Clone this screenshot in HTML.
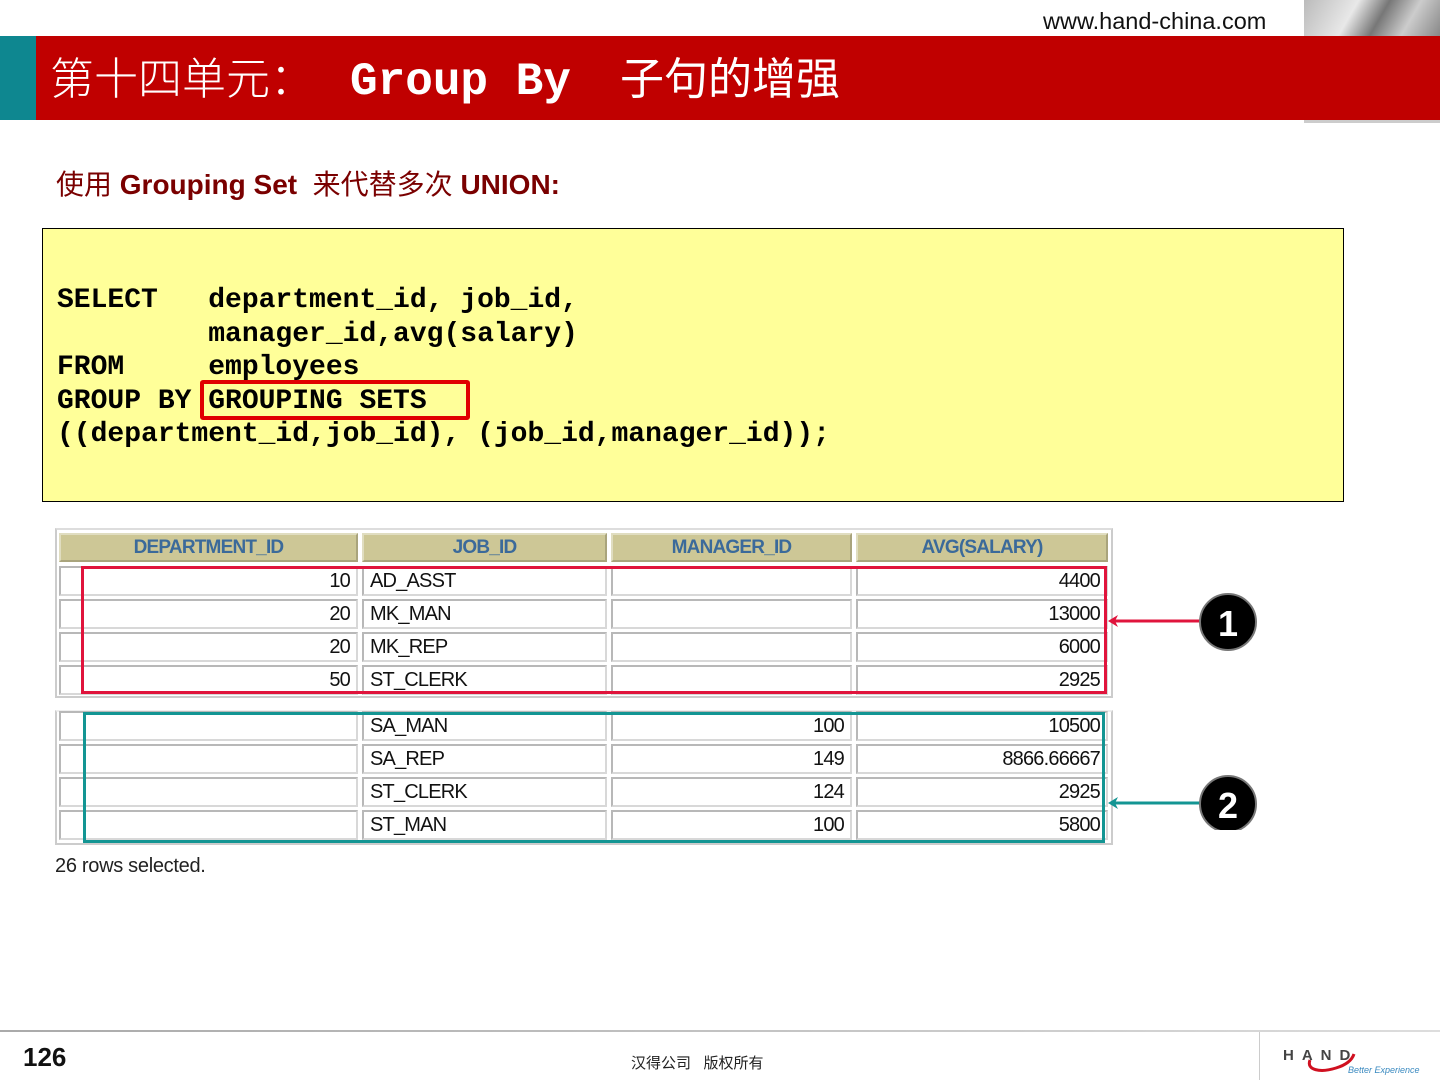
<!DOCTYPE html>
<html><head><meta charset="utf-8"><style>
*{margin:0;padding:0;box-sizing:border-box}
body{width:1440px;height:1080px;position:relative;background:#fff;overflow:hidden;font-family:"Liberation Sans","Noto Sans CJK SC",sans-serif}
.a{position:absolute}
.c{position:absolute;border:2px solid #b8b8b8;border-right-color:#d8d8d8;border-bottom-color:#d8d8d8;background:#fff;font-family:"Liberation Sans",sans-serif;font-size:20px;color:#111;line-height:26px;padding:0 6px;white-space:nowrap;letter-spacing:-0.8px}
.h{background:#cdc796;border-color:#e0ddc0 #a9a47c #a9a47c #e0ddc0;color:#3b6a9a;font-weight:bold;text-align:center;font-size:19px;line-height:25px}
.r{text-align:right}
pre{font-family:"Liberation Mono",monospace;font-weight:bold;font-size:28px;line-height:33.5px;color:#000}
.t{position:absolute;color:#fff;white-space:nowrap;font-size:46px}
</style></head><body>
<div class="a" style="left:1043px;top:8px;font-size:23.5px;color:#111">www.hand-china.com</div>
<div class="a" style="left:1304px;top:0;width:136px;height:36px;background:linear-gradient(120deg,#bbb,#e8e8e8 35%,#777 55%,#ccc 75%,#888)"></div>
<div class="a" style="left:1304px;top:120px;width:136px;height:3px;background:#ccc"></div>
<div class="a" style="left:0;top:36px;width:36px;height:84px;background:#0e8790"></div>
<div class="a" style="left:36px;top:36px;width:1404px;height:84px;background:#c00000"></div>
<div class="t" style="left:50px;font-weight:300;font-size:44px;top:43px">第十四单元：</div>
<div class="t" style="left:350px;font-family:'Liberation Mono',monospace;font-weight:bold;font-size:46px;top:56px">Group By</div>
<div class="t" style="left:620px;font-size:44px;top:43px">子句的增强</div>
<div class="a" style="left:56px;top:163px;font-size:28px;color:#7a0000;white-space:nowrap">使用 <b>Grouping Set</b>&nbsp; 来代替多次 <b>UNION:</b></div>
<div class="a" style="left:42px;top:228px;width:1302px;height:274px;background:#ffff99;border:1px solid #000"></div>
<pre class="a" style="left:57px;top:284px">SELECT   department_id, job_id,
         manager_id,avg(salary)
FROM     employees
GROUP BY GROUPING SETS
((department_id,job_id), (job_id,manager_id));</pre>
<div class="a" style="left:200px;top:380px;width:270px;height:40px;border:4px solid #e00000;border-radius:3px"></div>

<div class="a" style="left:55px;top:528px;width:1058px;height:170px;border:2px solid #ccc;border-top-color:#ddd"></div>
<div class="a" style="left:55px;top:710px;width:1058px;height:135px;border:2px solid #ccc;border-top-color:#eee"></div>

<div class="c h" style="left:59px;top:533px;width:299px;height:29px">DEPARTMENT_ID</div>
<div class="c h" style="left:362px;top:533px;width:245px;height:29px">JOB_ID</div>
<div class="c h" style="left:611px;top:533px;width:241px;height:29px">MANAGER_ID</div>
<div class="c h" style="left:856px;top:533px;width:252px;height:29px">AVG(SALARY)</div>

<div class="c r" style="left:59px;top:566px;width:299px;height:30px">10</div>
<div class="c" style="left:362px;top:566px;width:245px;height:30px">AD_ASST</div>
<div class="c" style="left:611px;top:566px;width:241px;height:30px"></div>
<div class="c r" style="left:856px;top:566px;width:252px;height:30px">4400</div>
<div class="c r" style="left:59px;top:599px;width:299px;height:30px">20</div>
<div class="c" style="left:362px;top:599px;width:245px;height:30px">MK_MAN</div>
<div class="c" style="left:611px;top:599px;width:241px;height:30px"></div>
<div class="c r" style="left:856px;top:599px;width:252px;height:30px">13000</div>
<div class="c r" style="left:59px;top:632px;width:299px;height:30px">20</div>
<div class="c" style="left:362px;top:632px;width:245px;height:30px">MK_REP</div>
<div class="c" style="left:611px;top:632px;width:241px;height:30px"></div>
<div class="c r" style="left:856px;top:632px;width:252px;height:30px">6000</div>
<div class="c r" style="left:59px;top:665px;width:299px;height:30px">50</div>
<div class="c" style="left:362px;top:665px;width:245px;height:30px">ST_CLERK</div>
<div class="c" style="left:611px;top:665px;width:241px;height:30px"></div>
<div class="c r" style="left:856px;top:665px;width:252px;height:30px">2925</div>

<div class="c" style="left:59px;top:711px;width:299px;height:30px"></div>
<div class="c" style="left:362px;top:711px;width:245px;height:30px">SA_MAN</div>
<div class="c r" style="left:611px;top:711px;width:241px;height:30px">100</div>
<div class="c r" style="left:856px;top:711px;width:252px;height:30px">10500</div>
<div class="c" style="left:59px;top:744px;width:299px;height:30px"></div>
<div class="c" style="left:362px;top:744px;width:245px;height:30px">SA_REP</div>
<div class="c r" style="left:611px;top:744px;width:241px;height:30px">149</div>
<div class="c r" style="left:856px;top:744px;width:252px;height:30px">8866.66667</div>
<div class="c" style="left:59px;top:777px;width:299px;height:30px"></div>
<div class="c" style="left:362px;top:777px;width:245px;height:30px">ST_CLERK</div>
<div class="c r" style="left:611px;top:777px;width:241px;height:30px">124</div>
<div class="c r" style="left:856px;top:777px;width:252px;height:30px">2925</div>
<div class="c" style="left:59px;top:810px;width:299px;height:30px"></div>
<div class="c" style="left:362px;top:810px;width:245px;height:30px">ST_MAN</div>
<div class="c r" style="left:611px;top:810px;width:241px;height:30px">100</div>
<div class="c r" style="left:856px;top:810px;width:252px;height:30px">5800</div>

<div class="a" style="left:81px;top:566px;width:1026px;height:128px;border:3px solid #e0143c"></div>
<div class="a" style="left:83px;top:712px;width:1022px;height:131px;border:3px solid #139593"></div>

<svg class="a" style="left:1100px;top:590px" width="170" height="240">
<line x1="103" y1="31" x2="12" y2="31" stroke="#e0143c" stroke-width="3"/>
<path d="M8 31 L18 25 L15 31 L18 37Z" fill="#e0143c"/>
<circle cx="128" cy="32" r="28" fill="#000" stroke="#777" stroke-width="2"/>
<text x="128" y="46" fill="#fff" font-family="Liberation Sans" font-weight="bold" font-size="36" text-anchor="middle">1</text>
<line x1="103" y1="213" x2="12" y2="213" stroke="#139593" stroke-width="3"/>
<path d="M8 213 L18 207 L15 213 L18 219Z" fill="#139593"/>
<circle cx="128" cy="214" r="28" fill="#000" stroke="#777" stroke-width="2"/>
<text x="128" y="228" fill="#fff" font-family="Liberation Sans" font-weight="bold" font-size="36" text-anchor="middle">2</text>
</svg>

<div class="a" style="left:55px;top:855px;font-size:20px;color:#222;letter-spacing:-0.3px">26 rows selected.</div>

<div class="a" style="left:0;top:1030px;width:1440px;height:2px;background:linear-gradient(90deg,#aaa,#ccc 70%,#ddd)"></div>
<div class="a" style="left:1259px;top:1032px;width:1px;height:48px;background:#ccc"></div>
<div class="a" style="left:23px;top:1042px;font-size:26px;font-weight:bold;color:#111">126</div>
<div class="a" style="left:631px;top:1052px;font-size:15px;color:#222;white-space:nowrap">汉得公司 &nbsp; 版权所有</div>
<svg class="a" style="left:1280px;top:1040px" width="160" height="40">
<path d="M30 20 C26 30 40 33 56 28 C66 25 72 20 74 14" fill="none" stroke="#d01020" stroke-width="3"/>
<text x="3" y="20" font-family="Liberation Sans" font-weight="bold" font-size="15" fill="#444" letter-spacing="8">HAND</text>
<text x="68" y="33" font-family="Liberation Sans" font-style="italic" font-size="9" fill="#3a8ac0">Better Experience</text>
</svg>
</body></html>
